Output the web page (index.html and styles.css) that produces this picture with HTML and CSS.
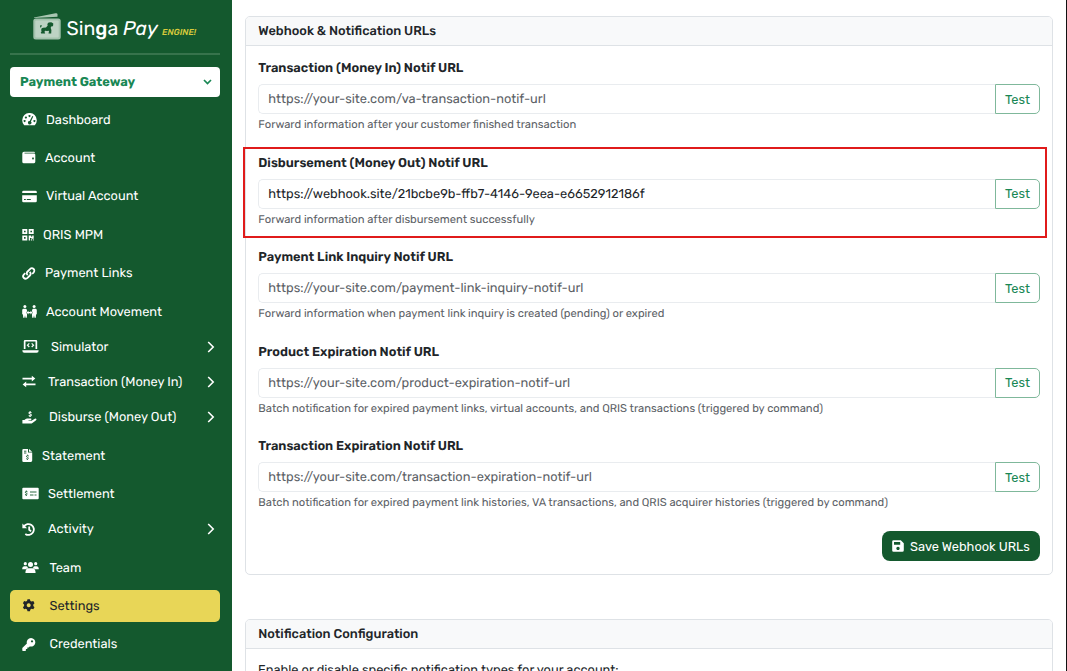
FILE: index.html
```html
<!DOCTYPE html>
<html lang="en">
<head>
    <meta charset="UTF-8">
    <meta name="viewport" content="width=device-width, initial-scale=1.0">
    <title>Settings - Singa Pay Engine</title>
    <link rel="stylesheet" href="styles.css">
</head>
<body>
    <div class="layout">
        <aside class="sidebar">
            <div class="brand">
                <svg class="brand-logo" viewBox="0 0 28 27">
                    <path d="M1 4.600 22.500.3q2-.3 2 1.200V3.800L1 5z" fill="#a9c6b2"/>
                    <rect x=".3" y="5.500" width="27.400" height="21" rx="2.500" fill="#a3c2ad"/>
                    <rect x="2.300" y="7.500" width="23.400" height="17" rx="1" fill="#bdd3c4"/>
                    <path d="M8.300 20.500l-.6-.8.8-1-.3-2q0-1.700 2-1.900l2.800-.3 1.700-2-.4-1.400 1.300-1.700 2.700-.1 1.700 1.400.2 1.900-1.200 1.100-.9-.4-.4 1.600.7 2.200-.2 3.400h-2.500l-.4-.7.9-.5-.5-1.500-1.700.2-1.900-.3-.7 1.200.8 1-.3.600zM7.300 14.800q-.5-1.500.3-2.800l1.200.2-.5 1.800zM18.800 9.500l1.500 1-.2 2-1.300-.5z" fill="#14592e"/>
                </svg>
                <span class="brand-name">Sin<b>g</b>a <i>Pay</i></span>
                <span class="brand-tag">ENGINE!</span>
            </div>

            <div class="product-select">
                <span>Payment Gateway</span>
                <svg width="9" height="6" viewBox="0 0 9 6"><path d="M1 1l3.500 3.500L8 1" fill="none" stroke="#198754" stroke-width="1.700"/></svg>
            </div>

            <nav class="menu">
                <a class="menu-item" href="#">
                    <svg class="icon w-15" viewBox="0 0 15 13"><path fill-rule="evenodd" d="M2.200 12.300A7.300 7.300 0 1 1 12.800 12.300zM7.500 2a1 1 0 1 0 .01 0zM3.900 3.500a1 1 0 1 0 .01 0zM2.600 7a1 1 0 1 0 .01 0zM12.400 7a1 1 0 1 0 .01 0zM10.300 3l-2.600 5a1.700 1.700 0 1 0 1.200.5L11.300 3.500z"/></svg>
                    <span>Dashboard</span>
                </a>
                <a class="menu-item" href="#">
                    <svg class="icon w-14" viewBox="0 0 14 13"><path fill-rule="evenodd" d="M2 .8h10q1 0 1 1H2.500v.8H12q1.300 0 1.300 1.200v7q0 1.400-1.300 1.400H1.800Q.3 12.200.3 10.700V2.500Q.3.8 2 .8zM11 6.600a.9.9 0 1 0 .01 0z"/></svg>
                    <span>Account</span>
                </a>
                <a class="menu-item" href="#">
                    <svg class="icon w-15" viewBox="0 0 15 13"><path fill-rule="evenodd" d="M1.500.8h12Q14.800.8 14.800 2v1H.2V2Q.2.8 1.500.8zM.2 5.300h14.600V11q0 1.300-1.300 1.300h-12Q.2 12.300.2 11zM2 9v1h1.800V9zM4.800 9v1h4V9z"/></svg>
                    <span>Virtual Account</span>
                </a>
                <a class="menu-item" href="#">
                    <svg class="icon w-12" viewBox="0 0 12 13"><path fill-rule="evenodd" d="M.3 1h5v5h-5zM2 2.700v1.600h1.600V2.700zM6.700 1h5v5h-5zM8.400 2.700v1.600H10V2.700zM.3 7.400h5v5h-5zM2 9.100v1.600h1.600V9.100zM6.700 7.400h2.500v1.300h1V7.400h1.500v3.300H9.400v-.8H8v2.500H6.700zM8.900 11.300h1v1.100h-1zM10.800 11.300h.9v1.100h-.9z"/></svg>
                    <span>QRIS MPM</span>
                </a>
                <a class="menu-item" href="#">
                    <svg class="icon w-14 line" viewBox="0 0 14 13"><path d="M5.700 8.200C4.300 6.800 4.600 5.500 5.600 4.500L8 2.100c1.100-1.100 2.600-1.100 3.600-.1s1 2.500-.1 3.600l-1.300 1.200"/><path d="M7.700 4.800C9.100 6.200 8.900 7.500 7.900 8.500L5.500 10.900c-1.100 1.100-2.600 1.100-3.600.1s-1-2.500.1-3.600l1.300-1.200"/></svg>
                    <span>Payment Links</span>
                </a>
                <a class="menu-item" href="#">
                    <svg class="icon w-15" viewBox="0 0 15 13"><circle cx="2.900" cy="1.600" r="1.500"/><circle cx="12.100" cy="1.600" r="1.500"/><path d="M.2 5.200Q.3 3.800 1.600 3.800h2q1 0 1.200 1l.3 1.300-.8 1.400.8 1.700-.3 3.600H3.500L3 10.300l-.5 2.500H1.200L1 9.800.2 8.900zM14.800 5.200q-.1-1.400-1.400-1.400h-2q-1 0-1.200 1l-.3 1.300.8 1.400-.8 1.700.3 3.600h1.300l.5-2.500.5 2.500h1.300l.2-3 .8-.9z"/><path d="M4.500 7.600L6.500 5.800v1.200h2V5.800l2 1.800-2 1.800V8.200h-2v1.200z"/></svg>
                    <span>Account Movement</span>
                </a>
                <a class="menu-item has-sub" href="#">
                    <svg class="icon w-17 gap-wide" viewBox="0 0 17 13"><path fill-rule="evenodd" d="M3 0h11q1.200 0 1.200 1.200V9h-1.700V1.600h-10V9H1.800V1.200Q1.800 0 3 0zM.3 10.200h16.400q0 2.500-2 2.500H2.300q-2 0-2-2.500z"/><path d="M7.300 3.400L5.500 5.200 7.300 7M9.700 3.400l1.800 1.800L9.700 7" fill="none" stroke="#fff" stroke-width="1.200"/></svg>
                    <span>Simulator</span>
                    <svg class="arrow" viewBox="0 0 8 12"><path d="M1.200 1l5 5-5 5"/></svg>
                </a>
                <a class="menu-item has-sub" href="#">
                    <svg class="icon w-14 gap-wide" viewBox="0 0 14 13"><path d="M.5 2.800h9.300V.8l3.500 2.800-3.500 2.800V4.500H.5zM13.500 8.500H4.200V6.600L.6 9.400l3.600 2.800v-2h9.300z"/></svg>
                    <span>Transaction (Money In)</span>
                    <svg class="arrow" viewBox="0 0 8 12"><path d="M1.200 1l5 5-5 5"/></svg>
                </a>
                <a class="menu-item has-sub" href="#">
                    <svg class="icon w-15 gap-wide" viewBox="0 0 15 13"><path d="M.4 9h2l1.300-1q.6-.4 1.300-.4h3.800q.8.200.6 1-.2.600-1 .6H6.500v.5h3l3.300-2q1.200-.5 1.600.4.3.7-.6 1.300l-3.400 2.500q-.7.600-1.600.6H.4z"/><path d="M9.500 1.700Q7.500.7 7 1.800c-.3 1.500 2.500 1 2.300 2.400Q8.700 5.400 6.700 4.400M8.100 0v1M8.100 5v1" fill="none" stroke="#fff" stroke-width="1.100"/></svg>
                    <span>Disburse (Money Out)</span>
                    <svg class="arrow" viewBox="0 0 8 12"><path d="M1.200 1l5 5-5 5"/></svg>
                </a>
                <a class="menu-item" href="#">
                    <svg class="icon w-11" viewBox="0 0 11 13"><path d="M1.500 0H6v3.500h4.200v8q0 1.400-1.400 1.400H1.500Q.3 12.900.3 11.700V1.200Q.3 0 1.500 0zM7 0l3.200 2.700H7z"/><path d="M2 2.200h2.400M2 4h2.400M6.800 7Q5 6.200 4.400 7.200c-.1 1.300 2.200 1 2 2.200q-.5 1.100-2.200.3M5.500 5.700v.8M5.500 10.200v.8" fill="none" stroke="#14592e" stroke-width=".9"/></svg>
                    <span>Statement</span>
                </a>
                <a class="menu-item" href="#">
                    <svg class="icon w-17" viewBox="0 0 17 13"><rect x=".3" y=".8" width="16.400" height="11.400" rx="1"/><path d="M5.500 4.800Q3.800 4 3.200 5c-.1 1.300 2.200 1 2 2.200Q4.700 8.300 3 7.500M4.300 3.500v.8M4.300 8v1M8 5h6.500M8 8h3.500M12.500 8h2" fill="none" stroke="#14592e" stroke-width=".9"/></svg>
                    <span>Settlement</span>
                </a>
                <a class="menu-item has-sub" href="#">
                    <svg class="icon w-14 gap-wide line" viewBox="0 0 14 13"><path d="M1.900 3.600A5.400 5.400 0 1 1 3.300 10.900M7.200 3.600v3.200l1.900 1.600"/><path d="M.4.500v4.700h4.700z" class="solid"/></svg>
                    <span>Activity</span>
                    <svg class="arrow" viewBox="0 0 8 12"><path d="M1.200 1l5 5-5 5"/></svg>
                </a>
                <a class="menu-item" href="#">
                    <svg class="icon w-17 gap-team" viewBox="0 0 17 13"><circle cx="8.500" cy="3.600" r="2.500"/><circle cx="3.300" cy="2.700" r="1.600"/><circle cx="13.700" cy="2.700" r="1.600"/><path d="M3.400 12q0-4.800 3.200-4.800h3.800q3.200 0 3.200 4.800zM.2 8.200q0-3 2.300-3h2q.7 0 .9.500.2 1 .8 1.400-1.500.2-2.300 1.100zM16.800 8.200q0-3-2.300-3h-2q-.7 0-.9.500-.2 1-.8 1.400 1.500.2 2.300 1.100z"/></svg>
                    <span>Team</span>
                </a>
                <a class="menu-item active" href="#">
                    <svg class="icon w-14 gap-set" viewBox="0 0 14 13"><path fill-rule="evenodd" d="M5.500.2h2.400l.5 1.700 1.200.7 1.700-.5 1.200 2.100-1.200 1.300v1.400l1.200 1.300-1.200 2.100-1.700-.5-1.200.7-.5 1.700H5.500L5 10.500l-1.200-.7-1.700.5L.9 8.200l1.200-1.300V5.500L.9 4.200l1.200-2.100 1.700.5L5 1.900zM6.700 4.300a2 2 0 1 0 .01 0z"/></svg>
                    <span>Settings</span>
                </a>
                <a class="menu-item" href="#">
                    <svg class="icon w-14 gap-set" viewBox="0 0 14 13"><path fill-rule="evenodd" d="M9 0a4.300 4.300 0 1 1-1.300 8.400L6.600 9.500H5.300v1.400H3.900v1.500L3.300 13H.8l-.5-.5V10l4.600-4.500A4.300 4.300 0 0 1 9 0zM10 2.200a1.100 1.100 0 1 0 .01 0z"/></svg>
                    <span>Credentials</span>
                </a>
            </nav>
        </aside>

        <main class="content">
            <section class="card webhook-card">
                <div class="card-header">Webhook &amp; Notification URLs</div>
                <div class="card-body">
                    <div class="field">
                        <label>Transaction (Money In) Notif URL</label>
                        <div class="input-group">
                            <div class="input"><span>https://your-site.com/va-transaction-notif-url</span></div>
                            <button class="btn-test">Test</button>
                        </div>
                        <small>Forward information after your customer finished transaction</small>
                    </div>
                    <div class="field highlight">
                        <label>Disbursement (Money Out) Notif URL</label>
                        <div class="input-group">
                            <div class="input filled"><span>https://webhook.site/21bcbe9b-ffb7-4146-9eea-e6652912186f</span></div>
                            <button class="btn-test">Test</button>
                        </div>
                        <small>Forward information after disbursement successfully</small>
                    </div>
                    <div class="field">
                        <label>Payment Link Inquiry Notif URL</label>
                        <div class="input-group">
                            <div class="input"><span>https://your-site.com/payment-link-inquiry-notif-url</span></div>
                            <button class="btn-test">Test</button>
                        </div>
                        <small>Forward information when payment link inquiry is created (pending) or expired</small>
                    </div>
                    <div class="field">
                        <label>Product Expiration Notif URL</label>
                        <div class="input-group">
                            <div class="input"><span>https://your-site.com/product-expiration-notif-url</span></div>
                            <button class="btn-test">Test</button>
                        </div>
                        <small>Batch notification for expired payment links, virtual accounts, and QRIS transactions (triggered by command)</small>
                    </div>
                    <div class="field">
                        <label>Transaction Expiration Notif URL</label>
                        <div class="input-group">
                            <div class="input"><span>https://your-site.com/transaction-expiration-notif-url</span></div>
                            <button class="btn-test">Test</button>
                        </div>
                        <small>Batch notification for expired payment link histories, VA transactions, and QRIS acquirer histories (triggered by command)</small>
                    </div>
                    <div class="actions">
                        <button class="btn-save">
                            <svg width="12" height="12" viewBox="0 0 12 12"><path fill-rule="evenodd" fill="#fff" d="M1.500.2h7.300l3 3v7.100q0 1.500-1.500 1.500H1.500Q.2 11.800.2 10.500v-9Q.2.200 1.500.200zM2 2v2.800h6.200V2zM6 6.700a1.700 1.700 0 1 0 .01 0z"/></svg>
                            <span>Save Webhook URLs</span>
                        </button>
                    </div>
                </div>
            </section>

            <section class="card">
                <div class="card-header">Notification Configuration</div>
                <div class="card-body">
                    <p class="intro">Enable or disable specific notification types for your account:</p>
                </div>
            </section>
        </main>
    </div>
</body>
</html>
```
FILE: styles.css
```css
*,
*::after {
    margin: 0;
    padding: 0;
    box-sizing: border-box;
}

body {
    font-family: Rubik, Roboto, sans-serif;
    font-size: 12.8px;
    color: #212529;
    background-color: #fff;
    overflow: hidden;
    text-rendering: geometricPrecision;
}

.layout {
    display: flex;
    height: 671px;
    overflow: hidden;
    border-right: 1px solid #111;
}

/* Sidebar */
.sidebar {
    width: 232px;
    flex-shrink: 0;
    padding: 0 12.5px 0 10px;
    background-color: #14592e;
    color: #fff;
}

.brand {
    display: flex;
    height: 55px;
    padding: 13px 0 0 22.5px;
    border-bottom: 2px solid #37734c;
    white-space: nowrap;
}

.brand-logo {
    width: 28px;
    height: 27px;
    flex-shrink: 0;
}

.brand-name {
    margin: 4px 0 0 6px;
    width: 95.5px;
    font-size: 19.6px;
    line-height: 24px;
}

.brand-name b {
    font-weight: 500;
}

.brand-tag {
    margin-top: 15px;
    color: #d9cb3c;
    font-size: 8.7px;
    font-style: italic;
    font-weight: 500;
    line-height: 10px;
}

.product-select {
    display: flex;
    align-items: center;
    justify-content: space-between;
    height: 30px;
    margin: 12px 0 6.5px;
    padding: 0 8px 0 10px;
    border-radius: 4px;
    background-color: #fff;
    color: #198754;
    font-weight: 700;
}

.product-select span {
    padding-top: 1px;
}

.menu-item {
    display: flex;
    align-items: center;
    height: 32px;
    margin-bottom: 6.4px;
    padding: 0 5px 0 12px;
    border-radius: 5px;
    color: #fff;
    text-decoration: none;
    white-space: nowrap;
}

.menu-item span {
    padding-top: 1.4px;
}

.menu-item.has-sub {
    margin-top: -3.2px;
}

.menu-item.active {
    background-color: #e8d657;
    color: #212529;
}

.icon {
    height: 13px;
    margin-right: 9px;
    flex-shrink: 0;
    fill: currentColor;
}

.icon.line {
    fill: none;
    stroke: currentColor;
    stroke-width: 1.8;
}

.icon .solid {
    fill: currentColor;
    stroke: none;
}

.w-11 { width: 11px; }
.w-12 { width: 12px; }
.w-14 { width: 14px; }
.w-15 { width: 15px; }
.w-17 { width: 17px; }

.gap-wide { margin-right: 12px; }
.gap-team { margin-right: 10.5px; }
.gap-set { margin-right: 13.5px; }

.arrow {
    width: 8px;
    height: 12px;
    margin-left: auto;
    fill: none;
    stroke: #fff;
    stroke-width: 1.6;
}

/* Content */
.content {
    flex: 1;
    padding: 16px 13px 0;
}

.card {
    border: 1px solid #dee2e6;
    border-radius: 5px;
    background-color: #fff;
}

.webhook-card {
    height: 559px;
    margin-bottom: 44px;
}

.card-header {
    height: 29px;
    padding-left: 12.3px;
    border-bottom: 1px solid #dee2e6;
    border-radius: 4px 4px 0 0;
    background-color: #f8f9fa;
    font-weight: 500;
    line-height: 29px;
}

.card-body {
    padding: 14px 12px 0;
}

.field {
    position: relative;
    height: 94.5px;
}

.field label {
    display: block;
    height: 24px;
    padding-left: 0.3px;
    font-weight: 600;
    line-height: 17.6px;
}

.field small {
    display: block;
    margin-top: 4px;
    padding-left: 0.3px;
    color: #5c6166;
    font-size: 11.2px;
    line-height: 14.8px;
    white-space: nowrap;
}

/* red frame around the disbursement field */
.highlight::after {
    content: "";
    position: absolute;
    top: -8px;
    left: -15px;
    right: -7px;
    height: 91.5px;
    border: 2px solid #e01b1b;
    pointer-events: none;
}

.input-group {
    display: flex;
    height: 30px;
}

.input {
    flex: 1;
    padding-left: 9.3px;
    border: 1px solid #e9ecef;
    border-right: none;
    border-radius: 5px 0 0 5px;
    color: #5c6166;
    line-height: 29.4px;
}

.input.filled {
    color: #212529;
}

.btn-test {
    width: 45px;
    border: 1px solid #7fb89b;
    border-radius: 0 5px 5px 0;
    background-color: #fff;
    color: #198754;
    font: inherit;
}

.actions {
    display: flex;
    justify-content: flex-end;
    margin-top: -2px;
}

.btn-save {
    display: flex;
    align-items: center;
    gap: 6px;
    width: 158px;
    height: 30px;
    padding-left: 10px;
    border: none;
    border-radius: 8px;
    background-color: #14592e;
    color: #fff;
    font: inherit;
    white-space: nowrap;
}

.btn-save span {
    padding-top: 1px;
}

.intro {
    line-height: 16px;
}
```
